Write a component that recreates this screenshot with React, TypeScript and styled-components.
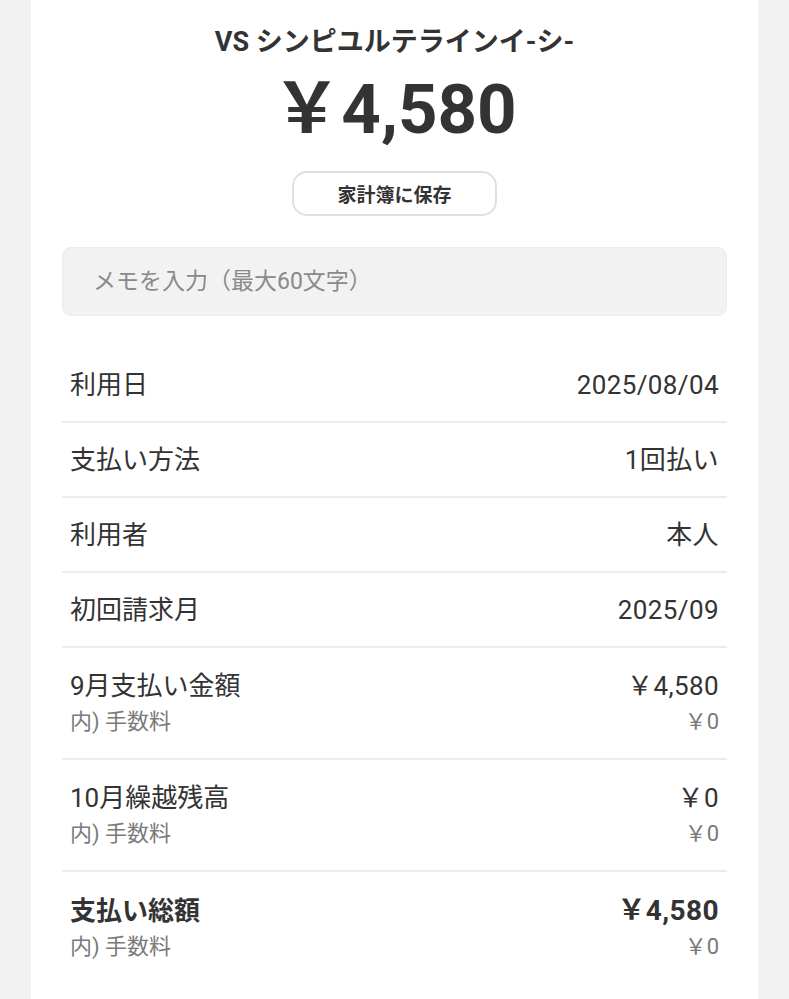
import { createGlobalStyle, styled } from 'styled-components';

const GlobalStyle = createGlobalStyle`
  body {
    margin: 0;
    background: #f2f2f2;
    font-family: Roboto, "Noto Sans CJK JP", sans-serif;
    color: #333;
  }
`;

type Detail = {
  label: string;
  value: string;
  sub?: { label: string; value: string };
  strong?: boolean;
};

const details: Detail[] = [
  { label: '利用日', value: '2025/08/04' },
  { label: '支払い方法', value: '1回払い' },
  { label: '利用者', value: '本人' },
  { label: '初回請求月', value: '2025/09' },
  { label: '9月支払い金額', value: '￥4,580', sub: { label: '内) 手数料', value: '￥0' } },
  { label: '10月繰越残高', value: '￥0', sub: { label: '内) 手数料', value: '￥0' } },
  { label: '支払い総額', value: '￥4,580', sub: { label: '内) 手数料', value: '￥0' }, strong: true },
];

export default function App() {
  return (
    <>
      <GlobalStyle />
      <Card>
        <Header>
          <Merchant>VS シンピユルテラインイ-シ-</Merchant>
          <Amount>￥4,580</Amount>
          <SaveButton type="button">家計簿に保存</SaveButton>
        </Header>
        <MemoInput placeholder="メモを入力（最大60文字）" />
        <List>
          {details.map((d, i) => (
            <Row key={d.label} $double={!!d.sub} $last={i === details.length - 1}>
              <Line>
                <Label $strong={d.strong}>{d.label}</Label>
                <Value $strong={d.strong}>{d.value}</Value>
              </Line>
              {d.sub && (
                <SubLine>
                  <SubText>{d.sub.label}</SubText>
                  <SubText>{d.sub.value}</SubText>
                </SubLine>
              )}
            </Row>
          ))}
        </List>
      </Card>
    </>
  );
}

const Card = styled.div`
  margin: 0 31px;
  min-height: 999px;
  background: #fff;
  padding: 0 31px;
  box-sizing: border-box;
  display: flex;
  flex-direction: column;
`;

const Header = styled.div`
  display: flex;
  flex-direction: column;
  align-items: center;
  padding-top: 26px;
`;

const Merchant = styled.div`
  font-size: 27px;
  line-height: 32px;
  font-weight: 700;
  color: #333;
`;

const Amount = styled.div`
  margin-top: 13px;
  font-size: 69px;
  line-height: 78px;
  font-weight: 700;
  color: #333;
`;

const SaveButton = styled.button`
  margin-top: 22px;
  width: 205px;
  height: 45px;
  border: 2px solid #e0e0e0;
  border-radius: 15px;
  background: #fff;
  font-family: Roboto, "Noto Sans CJK JP", sans-serif;
  font-size: 19px;
  font-weight: 700;
  color: #333;
  padding: 0;
`;

const MemoInput = styled.input`
  margin-top: 31px;
  height: 69px;
  box-sizing: border-box;
  width: 100%;
  border: 1px solid #ececec;
  border-radius: 9px;
  background: #f2f2f2;
  padding: 0 30px;
  font-family: Roboto, "Noto Sans CJK JP", sans-serif;
  font-size: 23px;
  color: #333;
  outline: none;

  &::placeholder {
    color: #8a8a8a;
  }
`;

const List = styled.div`
  margin-top: 32px;
  display: flex;
  flex-direction: column;
`;

const Row = styled.div<{ $double: boolean; $last: boolean }>`
  display: flex;
  flex-direction: column;
  justify-content: center;
  box-sizing: border-box;
  padding: ${p => (p.$double ? '23px 8px 22px' : '0 8px')};
  height: ${p => (p.$double ? '112px' : '75px')};
  border-bottom: ${p => (p.$last ? 'none' : '2px solid #ececec')};
`;

const Line = styled.div`
  display: flex;
  justify-content: space-between;
  align-items: center;
  line-height: 30px;
`;

const Label = styled.span<{ $strong?: boolean }>`
  font-size: 26px;
  font-weight: ${p => (p.$strong ? 700 : 400)};
  color: #333;
`;

const Value = styled.span<{ $strong?: boolean }>`
  font-size: ${p => (p.$strong ? '28px' : '26px')};
  font-weight: ${p => (p.$strong ? 700 : 400)};
  letter-spacing: 0.4px;
  color: #333;
`;

const SubLine = styled.div`
  display: flex;
  justify-content: space-between;
  align-items: center;
  margin-top: 7px;
  line-height: 28px;
`;

const SubText = styled.span`
  font-size: 22px;
  color: #7a7a7a;
`;
